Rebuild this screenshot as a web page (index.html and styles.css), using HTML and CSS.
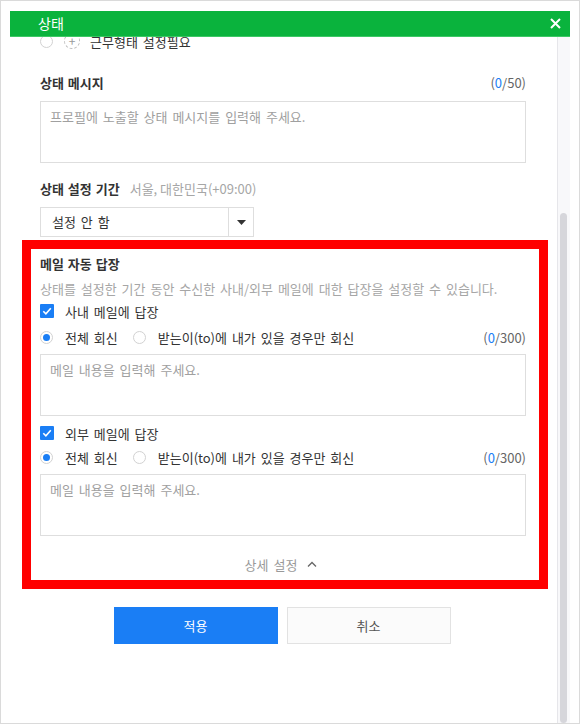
FILE: index.html
```html
<html>
  <head>
    <title>상태</title>
    <link rel="stylesheet" href="styles.css">
  </head>
  <body>
    <div class="window">
      <div class="dialog">
        <div class="dialog_head">
          <span class="dialog_title">상태</span>
          <span class="dialog_close">
            <svg width="11" height="11" viewBox="0 0 11 11"><path d="M1 1 L10 10 M10 1 L1 10" stroke="#fff" stroke-width="2" fill="none"/></svg>
          </span>
        </div>
        <div class="dialog_body">
          <div class="scroll_view">
            <div class="scroll_content">

              <div class="work_type">
                <span class="radio"></span>
                <span class="add_icon">+</span>
                <span class="work_text">근무형태 설정필요</span>
              </div>

              <div class="field_head msg_head">
                <span class="field_label">상태 메시지</span>
                <span class="counter">(<em>0</em>/50)</span>
              </div>
              <div class="textarea">프로필에 노출할 상태 메시지를 입력해 주세요.</div>

              <div class="field_head period_head">
                <span class="field_label">상태 설정 기간</span>
                <span class="field_sub">서울, 대한민국(+09:00)</span>
              </div>
              <div class="select">
                <span class="select_value">설정 안 함</span>
                <span class="select_arrow"><svg width="9" height="5" viewBox="0 0 9 5"><path d="M0 0 H9 L4.5 5 Z" fill="#333"/></svg></span>
              </div>

              <div class="auto_reply">
                <div class="field_label reply_title">메일 자동 답장</div>
                <div class="reply_desc">상태를 설정한 기간 동안 수신한 사내/외부 메일에 대한 답장을 설정할 수 있습니다.</div>

                <div class="check_row">
                  <span class="checkbox"><svg width="14" height="14" viewBox="0 0 14 14"><path d="M3.3 7.2 L5.9 9.8 L10.8 4.3" stroke="#fff" stroke-width="1.6" fill="none"/></svg></span>
                  <span>사내 메일에 답장</span>
                </div>
                <div class="radio_row">
                  <span class="radio checked"></span>
                  <span class="radio_label">전체 회신</span>
                  <span class="radio"></span>
                  <span class="radio_label">받는이(to)에 내가 있을 경우만 회신</span>
                  <span class="counter">(<em>0</em>/300)</span>
                </div>
                <div class="textarea">메일 내용을 입력해 주세요.</div>

                <div class="check_row check_second">
                  <span class="checkbox"><svg width="14" height="14" viewBox="0 0 14 14"><path d="M3.3 7.2 L5.9 9.8 L10.8 4.3" stroke="#fff" stroke-width="1.6" fill="none"/></svg></span>
                  <span>외부 메일에 답장</span>
                </div>
                <div class="radio_row radio_second">
                  <span class="radio checked"></span>
                  <span class="radio_label">전체 회신</span>
                  <span class="radio"></span>
                  <span class="radio_label">받는이(to)에 내가 있을 경우만 회신</span>
                  <span class="counter">(<em>0</em>/300)</span>
                </div>
                <div class="textarea">메일 내용을 입력해 주세요.</div>

                <div class="more">
                  <span>상세 설정</span>
                  <svg width="10" height="6" viewBox="0 0 10 6"><path d="M1 5.5 L5 1.5 L9 5.5" stroke="#666" stroke-width="1.3" fill="none"/></svg>
                </div>
              </div>

              <div class="buttons">
                <span class="btn btn_primary">적용</span>
                <span class="btn">취소</span>
              </div>

            </div>
          </div>
          <div class="scrollbar"><div class="scrollbar_thumb"></div></div>
        </div>
      </div>
    </div>
  </body>
</html>
```

FILE: styles.css
```css
body {
  margin: 0px;
  padding: 0px;
  background-color: #FFF;
  font-family: "Noto Sans CJK KR", "Noto Sans", sans-serif;
  font-size: 13px;
  word-spacing: 2px;
  color: #333;
}
.window {
  box-sizing: border-box;
  width: 580px;
  height: 724px;
  border: 1px solid #DADADA;
  padding: 10px 9px 0px 9px;
}
.dialog {
  display: flex;
  flex-direction: column;
  height: 100%;
}
.dialog_head {
  display: flex;
  align-items: center;
  justify-content: space-between;
  height: 25px;
  padding: 0px 9px 0px 28px;
  background-color: #0AB33D;
  border-bottom: 1px solid #3CC865;
  position: relative;
  z-index: 1;
}
.dialog_title {
  color: #FFF;
  font-size: 14px;
  line-height: 25px;
}
.dialog_close {
  display: flex;
}
.dialog_body {
  flex: 1;
  display: flex;
  min-height: 0;
}
.scroll_view {
  flex: 1;
  overflow: hidden;
}
.scroll_content {
  margin-top: -6px;
  padding: 0px 31px 80px 30px;
}
.scrollbar {
  width: 12px;
  border-left: 1px solid #E6E6EA;
  background-color: #F8F8FA;
  padding-top: 176px;
}
.scrollbar_thumb {
  margin-left: 2px;
  width: 7px;
  height: 510px;
  border-radius: 4px;
  background-color: #D6D6DB;
}

/* radio / checkbox */
.radio {
  box-sizing: border-box;
  display: inline-block;
  width: 13px;
  height: 13px;
  border: 1px solid #D2D2D2;
  border-radius: 50%;
  background-color: #FFF;
  position: relative;
  flex: none;
}
.radio.checked:after {
  content: "";
  position: absolute;
  left: 2px;
  top: 2px;
  width: 7px;
  height: 7px;
  border-radius: 50%;
  background-color: #1A7EF5;
}
.checkbox {
  display: inline-flex;
  width: 14px;
  height: 14px;
  background-color: #1A7EF5;
  border-radius: 1px;
  flex: none;
}

.work_type {
  display: flex;
  align-items: center;
  height: 20px;
}
.add_icon {
  box-sizing: border-box;
  display: inline-flex;
  align-items: center;
  justify-content: center;
  width: 16px;
  height: 16px;
  margin-left: 11px;
  border: 1px dashed #BDBDBD;
  border-radius: 50%;
  color: #999;
  font-size: 12px;
  line-height: 1;
}
.work_text {
  margin-left: 10px;
}

.field_head {
  display: flex;
  align-items: center;
  height: 18px;
  line-height: 18px;
}
.msg_head {
  margin-top: 23px;
  justify-content: space-between;
}
.period_head {
  margin-top: 17px;
}
.field_label {
  font-weight: bold;
  color: #333;
  word-spacing: 1px;
}
.field_sub {
  margin-left: 10px;
  color: #A6A6A6;
  word-spacing: 0px;
}
.counter {
  color: #666;
  margin-left: auto;
}
.counter em {
  font-style: normal;
  color: #1A7EF5;
}
.textarea {
  box-sizing: border-box;
  height: 62px;
  margin-top: 9px;
  border: 1px solid #DEDEDE;
  padding: 6px 9px;
  color: #A0A0A0;
  line-height: 18px;
}
.select {
  display: flex;
  box-sizing: border-box;
  width: 214px;
  height: 30px;
  margin-top: 9px;
  border: 1px solid #DEDEDE;
}
.select_value {
  flex: 1;
  padding-left: 11px;
  line-height: 28px;
  color: #333;
}
.select_arrow {
  display: flex;
  align-items: center;
  justify-content: center;
  width: 24px;
  border-left: 1px solid #DEDEDE;
}

/* mail auto reply */
.auto_reply {
  margin: 3px -22px 0px -18px;
  border: 9px solid #FF0000;
  padding: 6px 13px 6px 9px;
}
.reply_title {
  height: 18px;
  line-height: 18px;
}
.reply_desc {
  margin-top: 7px;
  height: 18px;
  line-height: 18px;
  color: #A6A6A6;
  white-space: nowrap;
}
.check_row {
  display: flex;
  align-items: center;
  gap: 11px;
  height: 20px;
  margin-top: 3px;
}
.check_second {
  margin-top: 7px;
}
.radio_row {
  display: flex;
  align-items: center;
  height: 20px;
  margin-top: 6px;
}
.radio_second {
  margin-top: 4px;
}
.radio_label {
  margin-left: 12px;
  margin-right: 15px;
}
.auto_reply .textarea {
  margin-top: 7px;
}
.more {
  display: flex;
  align-items: center;
  justify-content: center;
  gap: 10px;
  height: 20px;
  margin-top: 18px;
  padding-right: 4px;
  color: #999;
}

.buttons {
  display: flex;
  justify-content: center;
  gap: 9px;
  margin-top: 18px;
  padding-right: 2px;
}
.btn {
  box-sizing: border-box;
  display: flex;
  align-items: center;
  justify-content: center;
  width: 164px;
  height: 37px;
  border: 1px solid #E2E2E2;
  background-color: #FBFBFB;
  color: #555;
  font-size: 13px;
}
.btn_primary {
  border-color: #1A7EF5;
  background-color: #1A7EF5;
  color: #FFF;
}
```
